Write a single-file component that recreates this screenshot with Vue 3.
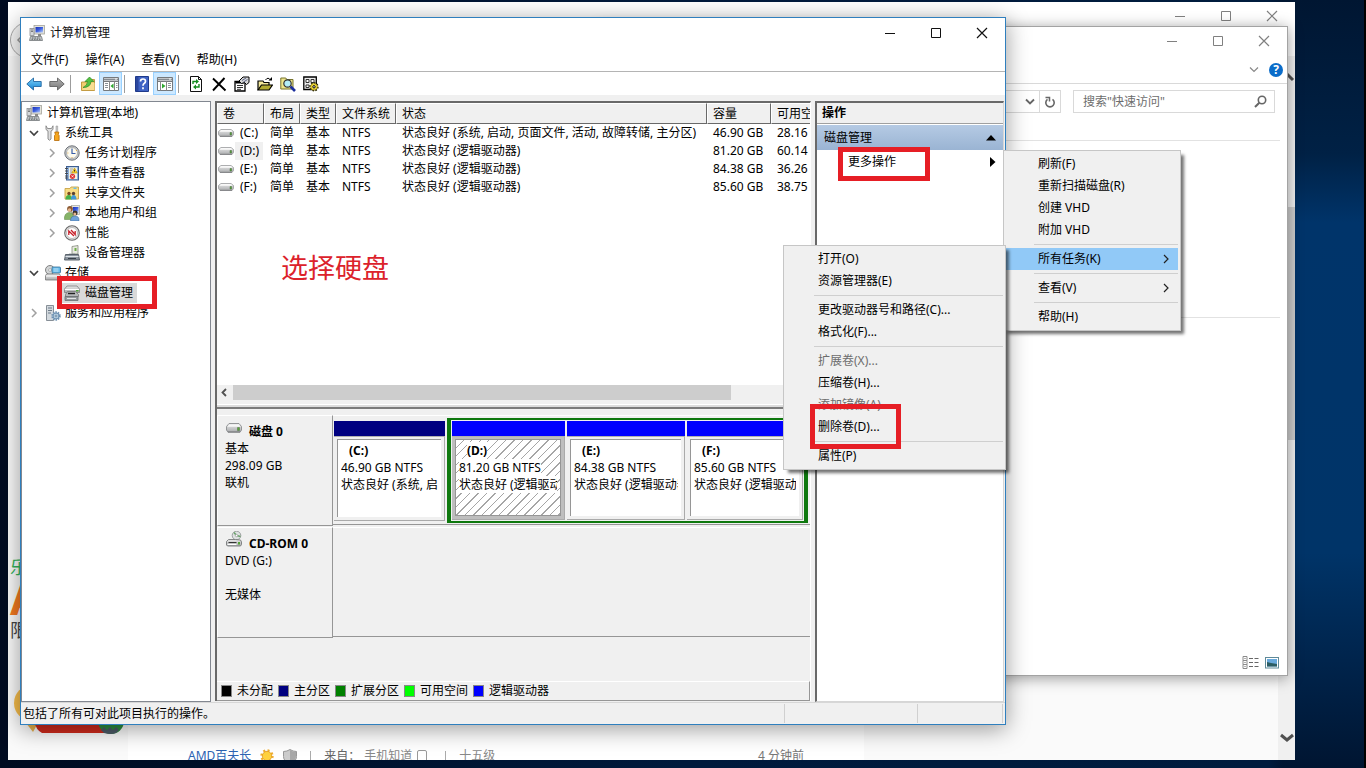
<script setup>
const menus = ['文件(F)', '操作(A)', '查看(V)', '帮助(H)']

const tools = [
  { icon: 'back', label: '后退' },
  { icon: 'forward', label: '前进' },
  { sep: true },
  { icon: 'up', label: '向上' },
  { icon: 'paneleft', label: '显示/隐藏控制台树', on: true },
  { sep: true },
  { icon: 'help', label: '帮助' },
  { icon: 'paneright', label: '显示/隐藏操作窗格', on: true },
  { sep: true },
  { icon: 'refresh', label: '刷新' },
  { icon: 'delete', label: '删除' },
  { icon: 'props', label: '属性' },
  { icon: 'open', label: '打开' },
  { icon: 'find', label: '查找' },
  { icon: 'settings', label: '设置' },
]

const tree = [
  { text: '计算机管理(本地)', icon: 'computer', level: 0 },
  { text: '系统工具', icon: 'tools', level: 1, state: 'open' },
  { text: '任务计划程序', icon: 'clock', level: 2, state: 'closed' },
  { text: '事件查看器', icon: 'events', level: 2, state: 'closed' },
  { text: '共享文件夹', icon: 'shared', level: 2, state: 'closed' },
  { text: '本地用户和组', icon: 'users', level: 2, state: 'closed' },
  { text: '性能', icon: 'perf', level: 2, state: 'closed' },
  { text: '设备管理器', icon: 'device', level: 2 },
  { text: '存储', icon: 'storage', level: 1, state: 'open' },
  { text: '磁盘管理', icon: 'diskmgmt', level: 2, selected: true },
  { text: '服务和应用程序', icon: 'services', level: 1, state: 'closed' },
]

const columns = ['卷', '布局', '类型', '文件系统', '状态', '容量', '可用空间']
const volumes = [
  { name: '(C:)', status: '状态良好 (系统, 启动, 页面文件, 活动, 故障转储, 主分区)', size: '46.90 GB', free: '28.16 GB' },
  { name: '(D:)', status: '状态良好 (逻辑驱动器)', size: '81.20 GB', free: '60.14 GB', picked: true },
  { name: '(E:)', status: '状态良好 (逻辑驱动器)', size: '84.38 GB', free: '36.26 GB' },
  { name: '(F:)', status: '状态良好 (逻辑驱动器)', size: '85.60 GB', free: '38.75 GB' },
]

const logical = [
  { name: '(D:)', size: '81.20 GB NTFS', cls: 'part-d', picked: true },
  { name: '(E:)', size: '84.38 GB NTFS', cls: 'part-e' },
  { name: '(F:)', size: '85.60 GB NTFS', cls: 'part-f' },
]

const legend = [
  { text: '未分配', cls: 'black' },
  { text: '主分区', cls: 'navy' },
  { text: '扩展分区', cls: 'green' },
  { text: '可用空间', cls: 'lime' },
  { text: '逻辑驱动器', cls: 'blue' },
]

const actionMenu = [
  { text: '刷新(F)' },
  { text: '重新扫描磁盘(R)' },
  { text: '创建 VHD' },
  { text: '附加 VHD' },
  { sep: true },
  { text: '所有任务(K)', sub: true, hot: true },
  { sep: true },
  { text: '查看(V)', sub: true },
  { sep: true },
  { text: '帮助(H)' },
]

const taskMenu = [
  { text: '打开(O)' },
  { text: '资源管理器(E)' },
  { sep: true },
  { text: '更改驱动器号和路径(C)...' },
  { text: '格式化(F)...' },
  { sep: true },
  { text: '扩展卷(X)...', off: true },
  { text: '压缩卷(H)...' },
  { text: '添加镜像(A)...', off: true },
  { text: '删除卷(D)...', marked: true },
  { sep: true },
  { text: '属性(P)' },
]
</script>

<template>
  <div class="desktop">
    <svg class="defs" width="0" height="0" aria-hidden="true">
      <defs>
        <linearGradient id="gBlue" x1="0" y1="0" x2="0" y2="1"><stop offset="0" stop-color="#7fd3fa" /><stop offset="1" stop-color="#1382d2" /></linearGradient>
        <linearGradient id="gGrey" x1="0" y1="0" x2="0" y2="1"><stop offset="0" stop-color="#b5b5b5" /><stop offset="1" stop-color="#777" /></linearGradient>
        <linearGradient id="gScreen" x1="0" y1="0" x2="1" y2="1"><stop offset="0" stop-color="#1a2fb4" /><stop offset=".5" stop-color="#3c60e0" /><stop offset="1" stop-color="#b9d0fa" /></linearGradient>
        <linearGradient id="gDrive" x1="0" y1="0" x2="0" y2="1"><stop offset="0" stop-color="#e9e9e9" /><stop offset="1" stop-color="#a9abad" /></linearGradient>
        <symbol id="i-computer" viewBox="0 0 16 16">
          <rect x="5" y="0.5" width="10.5" height="8.5" fill="#e4e4dc" stroke="#a3a39c" stroke-width=".8" />
          <rect x="6.5" y="2" width="7.5" height="5.5" fill="url(#gScreen)" />
          <path d="M9 9h3v2H9z" fill="#888" />
          <rect x="1" y="3.5" width="4" height="7" fill="#d5d8da" stroke="#8b8d8f" stroke-width=".8" />
          <path d="M2 5h2M2 6.500h2" stroke="#555" stroke-width=".7" />
          <path d="M1.500 11.500h11l1 4H.5z" fill="#bfc3c5" stroke="#74787b" stroke-width=".8" />
          <path d="M3 13h8M2.500 14.300h9" stroke="#53585b" stroke-width=".8" stroke-dasharray="1.500 1" />
        </symbol>
        <symbol id="i-tools" viewBox="0 0 16 16">
          <path d="M1 .8v3.700l2 1.500v8q1.200 2.500 3 0V6l2-1.500V.8L6.500 3.500h-4z" fill="#dedede" stroke="#848484" stroke-width=".9" />
          <path d="M11 1h1.700v5.500H11z" fill="#ccc" stroke="#888" stroke-width=".5" />
          <path d="M9.800 7h4l-.5 2.500.8 1V15.500H9.500v-5l.8-1z" fill="#f7a61c" stroke="#b56a06" stroke-width=".8" />
        </symbol>
        <symbol id="i-clock" viewBox="0 0 16 16">
          <circle cx="8" cy="8" r="7.200" fill="#c9cdd1" stroke="#6d7175" />
          <circle cx="8" cy="8" r="5.500" fill="#fdfbef" stroke="#9b9c9e" stroke-width=".7" />
          <path d="M8 3.500v5h3.500" fill="none" stroke="#3a5ea8" stroke-width="1.200" />
          <path d="M12 5.500h.8M3.500 8h.8M8 12v.8" stroke="#db9a2b" />
        </symbol>
        <symbol id="i-events" viewBox="0 0 16 16">
          <rect x="2.500" y="1.500" width="12" height="13.500" fill="#8fb0da" stroke="#3e5f92" />
          <rect x="5" y="2.500" width="8" height="11.500" fill="#f4f4e4" />
          <path d="M1 3.500h3M1 6h3M1 8.500h3M1 11h3M1 13h3" stroke="#444" stroke-width=".9" />
          <path d="M6 4h3M6 6h2M6 8h2" stroke="#888" stroke-width=".8" />
          <path d="M10.500 3l2.800 5H7.800z" fill="#ffd42e" stroke="#b38a00" stroke-width=".6" />
          <path d="M10.500 4.800v1.800" stroke="#333" />
          <circle cx="8.500" cy="11.300" r="2.600" fill="#e03434" /><path d="M7.500 10.300l2 2M9.500 10.300l-2 2" stroke="#fff" stroke-width=".8" />
        </symbol>
        <symbol id="i-shared" viewBox="0 0 16 16">
          <path d="M1 3.500h5l1-1.500h7.500v12H1z" fill="#f7dc84" stroke="#c9a548" stroke-width=".9" />
          <path d="M9.500 2.500h3v1.500h-3z" fill="#6bbce8" />
          <circle cx="5" cy="8.500" r="1.700" fill="#7c4b22" /><circle cx="9.500" cy="8.500" r="1.700" fill="#5a4130" />
          <path d="M1.500 14.500q0-4.500 3.300-4.500t3.200 4.500z" fill="#46b04a" /><path d="M7 14.500q0-4.500 2.700-4.500t2.800 4.500z" fill="#3f97d6" />
        </symbol>
        <symbol id="i-users" viewBox="0 0 16 16">
          <rect x="7.500" y=".5" width="8" height="9" fill="#e8e8e0" stroke="#b0b0aa" stroke-width=".8" /><rect x="9" y="2" width="5.500" height="6" fill="url(#gScreen)" />
          <circle cx="6" cy="3.800" r="2.900" fill="#8b5a33" /><circle cx="5.500" cy="5" r="1.700" fill="#e7b58d" />
          <path d="M.5 14.500q-.5-6.500 4.500-7t5 7z" fill="#86b368" stroke="#5c8341" stroke-width=".5" />
          <circle cx="11" cy="8" r="2.500" fill="#3b332c" /><circle cx="10.800" cy="9" r="1.500" fill="#e7b58d" />
          <path d="M6.500 16q0-5 4.500-5t4 5z" fill="#6fa3da" stroke="#386595" stroke-width=".5" />
        </symbol>
        <symbol id="i-perf" viewBox="0 0 16 16">
          <circle cx="8" cy="8" r="7.300" fill="#e4e4e4" stroke="#686868" stroke-width="1.100" />
          <circle cx="8" cy="8" r="5.500" fill="#fff" stroke="#999" stroke-width=".6" />
          <path d="M4.800 10V6l5.200 5M7 5l4.200 4.500V6" fill="none" stroke="#c8202a" stroke-width="1.300" />
        </symbol>
        <symbol id="i-device" viewBox="0 0 16 16">
          <path d="M8 1.500l6-1V9H8z" fill="#e7e9df" stroke="#84887c" stroke-width=".8" /><path d="M10.500 3h2v3h-2z" fill="#6fae48" />
          <path d="M5 8.500h6l1 2.500H4z" fill="#9ea3a8" />
          <path d="M1.500 9.500h13l1 5.500H.5z" fill="#8b949e" stroke="#4f5861" stroke-width=".9" />
          <path d="M1.500 11.500h13" stroke="#dfe4e8" /><path d="M4 13.500h8" stroke="#394149" />
        </symbol>
        <symbol id="i-storage" viewBox="0 0 16 16">
          <circle cx="5" cy="5" r="4.500" fill="#d2d5d6" stroke="#777" stroke-width=".9" /><circle cx="5" cy="5" r="1.400" fill="#fff" stroke="#888" stroke-width=".6" />
          <rect x="7" y="2" width="8.500" height="6" rx="1" fill="#64b9e9" stroke="#356f98" stroke-width=".8" /><path d="M8.500 4h5M8.500 6h5" stroke="#d9f1ff" stroke-width=".8" />
          <path d="M1.500 9h13l1 2v4H.5v-4z" fill="url(#gDrive)" stroke="#777" stroke-width=".8" />
          <path d="M1 11h14" stroke="#fafafa" /><path d="M12.500 12.500h2v1.500h-2z" fill="#4da635" />
        </symbol>
        <symbol id="i-diskmgmt" viewBox="0 0 16 16">
          <path d="M3 1h10l2.500 3v3.500H.5V4z" fill="url(#gDrive)" stroke="#7d7f81" stroke-width=".8" />
          <path d="M.8 4.500h14.400" stroke="#fff" /><path d="M12 5h2.500v1.500H12z" fill="#4da635" />
          <path d="M3.500 6.500h8l3 3v2H1.500v-2z" fill="#b4b7b9" stroke="#777" stroke-width=".8" /><path d="M4 8.500h7" stroke="#222" stroke-width="1.400" />
          <path d="M1 11.500h13v4H1z" fill="#959a9d" stroke="#6a6e71" stroke-width=".8" /><path d="M3 13.500h9" stroke="#e3e6e8" />
        </symbol>
        <symbol id="i-services" viewBox="0 0 16 16">
          <path d="M1.500.5h7v15h-7z" fill="#d3d9de" stroke="#7c858c" stroke-width=".9" /><path d="M3 3h4M3 5.500h4M3 8h3" stroke="#6d7b87" stroke-width="1.200" />
          <circle cx="11" cy="11" r="3.800" fill="#dbe8f3" stroke="#6a8fb0" stroke-width="1.800" stroke-dasharray="1.500 .9" /><circle cx="11" cy="11" r="2.900" fill="#c4d9ea" stroke="#6a8fb0" /><circle cx="11" cy="11" r="1" fill="#fff" stroke="#4c718f" stroke-width=".8" />
        </symbol>
        <symbol id="i-drive" viewBox="0 0 16 10">
          <path d="M3 .5h10l2.500 3v3.500l-1.500 2.300H2L.5 7V3.500z" fill="url(#gDrive)" stroke="#8a8c8e" stroke-width=".9" />
          <path d="M3 1.500h10l1.500 2.300h-13z" fill="#f6f6f6" /><path d="M2 8.800h12" stroke="#77797b" stroke-width=".8" />
          <path d="M11.500 4.500h2v3h-2z" fill="#54a436" stroke="#4f6d44" stroke-width=".5" />
        </symbol>
        <symbol id="i-drive-small" viewBox="0 0 16 8">
          <path d="M3 .5h10l2.500 2v3l-1.500 2H2l-1.500-2v-3z" fill="url(#gDrive)" stroke="#9a9c9e" stroke-width=".8" />
          <path d="M3 1h10l1.500 1.700h-13z" fill="#f8f8f8" /><path d="M2 7.300h12" stroke="#77797b" stroke-width=".8" />
          <path d="M12 3.500h1.600v2.500H12z" fill="#54a436" stroke="#4f6d44" stroke-width=".5" />
        </symbol>
        <symbol id="i-cdrom" viewBox="0 0 16 16">
          <circle cx="10.500" cy="4.500" r="4.300" fill="#dfe2e2" stroke="#898d8e" stroke-width=".8" /><path d="M10.500 4.500L8 1.500M10.500 4.500l4 1" stroke="#68a36a" stroke-width="1.500" /><circle cx="10.500" cy="4.500" r="1.200" fill="#fff" stroke="#888" stroke-width=".6" />
          <path d="M2.500 8.500h7l5 .5 1 2v2.500l-1 1.500h-13L.5 14v-3.500z" fill="url(#gDrive)" stroke="#77797b" stroke-width=".9" /><path d="M2.500 11.500h8" stroke="#333" /><path d="M12 11h2v2.500h-2z" fill="#54a436" /><path d="M1.500 13.500h9" stroke="#fff" />
        </symbol>
        <symbol id="i-back" viewBox="0 0 16 16"><path d="M.8 8L7.500 2v3.500h7.700v5H7.500V14z" fill="url(#gBlue)" stroke="#2166a2" stroke-width=".9" /></symbol>
        <symbol id="i-forward" viewBox="0 0 16 16"><path d="M15.200 8L8.500 2v3.500H.8v5h7.700V14z" fill="url(#gGrey)" stroke="#626262" stroke-width=".9" /></symbol>
        <symbol id="i-up" viewBox="0 0 16 16">
          <path d="M1.500 6h5l1.500-2.500h6.500v11h-13z" fill="#f3ce72" stroke="#bd9336" stroke-width=".9" /><path d="M2 14h12.500V7H7z" fill="#f9dd92" />
          <path d="M3 11.500q4.500-2 4.500-6H5L9.500 1 14 5.500h-3q-.5 6-8 6z" fill="#54c143" stroke="#2d8a22" stroke-width=".7" />
        </symbol>
        <symbol id="i-paneleft" viewBox="0 0 16 16">
          <path d="M.5 1.500h15v13H.5z" fill="#fff" stroke="#75797d" /><path d="M1 3.500h14" stroke="#858b91" stroke-width="2" /><path d="M.5 5.500h15" stroke="#75797d" /><path d="M12 3h2" stroke="#fff" />
          <path d="M6.500 5.500v9M11.500 5.500v9" stroke="#888" /><path d="M2 7.500h3M2 9.500h3M2 11.500h3M13 7.500h1.500M13 9.500h1.500M13 11.500h1.500" stroke="#8b9298" /><path d="M10.500 7.500v5l-3-2.500z" fill="#2fa82f" />
        </symbol>
        <symbol id="i-paneright" viewBox="0 0 16 16">
          <path d="M.5 1.500h15v13H.5z" fill="#fff" stroke="#75797d" /><path d="M1 3.500h14" stroke="#858b91" stroke-width="2" /><path d="M.5 5.500h15" stroke="#75797d" /><path d="M12 3h2" stroke="#fff" />
          <path d="M3.500 5.500v9M9.500 5.500v9" stroke="#888" /><path d="M11 7.500h3M11 9.500h3M11 11.500h3" stroke="#8b9298" /><path d="M5 7.500v5L8.500 10z" fill="#2fa82f" />
        </symbol>
        <symbol id="i-help" viewBox="0 0 16 16">
          <path d="M1.500.5h13v15h-13z" fill="#3f63c4" stroke="#1f3a8b" /><path d="M2 1h2.500v14H2z" fill="#2b479e" />
          <path d="M6.500 5.500q0-2.500 2.500-2.500t2.500 2.300q0 1.400-1.400 2.200Q9 8.200 9 9.800M9 11.300v1.900" fill="none" stroke="#fff" stroke-width="1.700" />
        </symbol>
        <symbol id="i-refresh" viewBox="0 0 16 16">
          <path d="M2.500.5h8l3 3v12h-11z" fill="#fff" stroke="#111" /><path d="M10.500.5v3h3" fill="none" stroke="#111" />
          <path d="M5 8V5.500h3.500M11 8v3H7.500" fill="none" stroke="#168c20" stroke-width="1.400" /><path d="M8 3l3 2.500L8 8zM8 8.500v5L5 11z" fill="#168c20" />
        </symbol>
        <symbol id="i-delete" viewBox="0 0 16 16"><path d="M2 2.500l12.500 12M13.500 2L2 14.500" stroke="#000" stroke-width="1.900" /></symbol>
        <symbol id="i-props" viewBox="0 0 16 16">
          <path d="M1 5.500h10v9.500H1z" fill="#fff" stroke="#000" stroke-width="1.300" /><path d="M1.500 6.500h9" stroke="#000" stroke-width="2" /><path d="M3 9.500h6M3 11.500h6M3 13.300h4" stroke="#333" />
          <path d="M5 5l4-4h6v5.500l-2.500 2-2-2-3 1z" fill="#d6d6d6" stroke="#000" /><path d="M8 4.500l4-2.500M9.500 6l4-2.500" stroke="#5a6488" />
        </symbol>
        <symbol id="i-open" viewBox="0 0 16 16">
          <path d="M1 14V5h5l1 1.500h5V9" fill="#f3e89b" stroke="#000" stroke-width="1.200" /><path d="M1 14l3.500-5h11L12 14z" fill="#b0a932" stroke="#000" stroke-width="1.200" />
          <path d="M8.500 4q2.500-3.500 5 0" fill="none" stroke="#000" /><path d="M11.500 4.500h3.500V1z" fill="#000" />
        </symbol>
        <symbol id="i-find" viewBox="0 0 16 16">
          <path d="M.8 2h5l1 1.500H13v9.500H.8z" fill="#eee58c" stroke="#77732b" /><circle cx="7.500" cy="7.500" r="3.700" fill="#b3edf8" stroke="#333" stroke-width="1.200" /><path d="M10.500 10.500l4.500 4.500" stroke="#1b2e9d" stroke-width="2.600" />
        </symbol>
        <symbol id="i-settings" viewBox="0 0 16 16">
          <path d="M.8 1h12.500v12.500H.8z" fill="#eee" stroke="#000" stroke-width="1.300" /><path d="M3 3.500h3v3H3zM8 3.500h3v3H8zM3 9h3v2.500H3z" fill="#fff" stroke="#333" />
          <circle cx="11" cy="10.800" r="3.400" fill="#f5df3d" stroke="#302b00" stroke-width="2.600" stroke-dasharray="1.400 1.200" /><circle cx="11" cy="10.800" r="3.300" fill="#f5df3d" stroke="#7a6a00" stroke-width=".5" /><circle cx="11" cy="10.800" r="1.200" fill="#fff" stroke="#000" />
        </symbol>
        <symbol id="i-min" viewBox="0 0 12 12"><path d="M1 6.500h10" stroke="currentColor" /></symbol>
        <symbol id="i-max" viewBox="0 0 12 12"><path d="M1.500 1.500h9v9h-9z" fill="none" stroke="currentColor" /></symbol>
        <symbol id="i-close" viewBox="0 0 12 12"><path d="M1 1l10 10M11 1L1 11" stroke="currentColor" stroke-width="1.200" /></symbol>
      </defs>
    </svg>

    <section class="browser" aria-label="浏览器">
      <div class="controls top-controls">
        <button aria-label="最小化"><svg width="12" height="12"><use href="#i-min" /></svg></button>
        <button aria-label="最大化"><svg width="12" height="12"><use href="#i-max" /></svg></button>
        <button aria-label="关闭"><svg width="12" height="12"><use href="#i-close" /></svg></button>
      </div>
      <svg class="nav-back" width="38" height="38" viewBox="0 0 38 38"><circle cx="19" cy="19" r="17.500" fill="#f8f8f8" stroke="#a9a9a9" /><path d="M13 15l-4 4 4 4" fill="none" stroke="#999" stroke-width="1.500" /></svg>
      <div class="page">
        <div class="ad">
          <span class="ad-green">乐</span>
          <span class="ad-orange">A</span>
          <span class="ad-dark">限</span>
          <svg class="ad-art" width="116" height="56" viewBox="0 0 116 56">
            <circle cx="22" cy="22" r="18" fill="#f7bd4b" />
            <path d="M16 42h12l-5 9z" fill="#e7b04b" /><path d="M24 40h72l-2 12H32q-6-3-8-12z" fill="#cf2a1c" />
            <circle cx="101" cy="40" r="13" fill="#2c8f3e" /><path d="M91 49l3-3 3 3 3-3 3 3 3-3 3 3-3 3q-5 2-12 0z" fill="#4c5a66" />
          </svg>
        </div>
        <div class="post">
          <a href="#">AMD百夫长</a>
          <svg width="16" height="16" viewBox="0 0 16 16"><circle cx="8" cy="8" r="5.500" fill="none" stroke="#eeaf35" stroke-width="2.400" stroke-dasharray="2 2.300" /><circle cx="8" cy="8" r="4.700" fill="#ffd13d" stroke="#e29820" stroke-width=".8" /></svg>
          <svg class="shield" width="14" height="15" viewBox="0 0 14 15"><path d="M.5 2.500Q4 2.500 7 .5q3 2 6.500 2v5q0 5-6.500 7-6.500-2-6.500-7z" fill="#ccc" stroke="#999" /><path d="M7 1v13q6-2 6-7V3Q9.500 3 7 1z" fill="#a8a8a8" /></svg>
          <i></i><span class="from">来自：</span><span class="phone-name">手机知道</span>
          <svg class="phone" width="12" height="16" viewBox="0 0 12 16"><rect x="1.500" y="2.500" width="9" height="13" rx="1.500" fill="none" stroke="#999" /></svg>
          <i></i><span>十五级</span><span class="ago">4 分钟前</span>
        </div>
        <div class="side-page"></div>
        <div class="page-scroll">
          <svg width="18" height="24" viewBox="0 0 18 24"><path d="M3 14l6-6 6 6" fill="none" stroke="#505050" stroke-width="3" /></svg>
          <div class="page-thumb"></div>
          <svg class="down" width="18" height="24" viewBox="0 0 18 24"><path d="M3 9l6 5 6-5" fill="none" stroke="#505050" stroke-width="3" /></svg>
        </div>
      </div>
    </section>

    <section class="explorer" aria-label="资源管理器">
      <div class="controls">
        <button aria-label="最小化"><svg width="12" height="12"><use href="#i-min" /></svg></button>
        <button aria-label="最大化"><svg width="12" height="12"><use href="#i-max" /></svg></button>
        <button aria-label="关闭"><svg width="12" height="12"><use href="#i-close" /></svg></button>
      </div>
      <div class="ribbon">
        <svg width="10" height="8" viewBox="0 0 10 8"><path d="M1 1.500l4 4 4-4" fill="none" stroke="#888" stroke-width="1.200" /></svg>
        <button class="help" aria-label="帮助">?</button>
      </div>
      <div class="address">
        <div class="path"><svg width="10" height="8" viewBox="0 0 10 8"><path d="M1 1.500l4 4 4-4" fill="none" stroke="#666" stroke-width="1.800" /></svg></div>
        <button class="reload" aria-label="刷新"><svg width="12" height="14" viewBox="0 0 12 14"><path d="M3.500 4.300A4.200 4.200 0 1 0 8.500 4.300" fill="none" stroke="#666" stroke-width="1.600" /><path d="M1.500 2.500h4v4" fill="none" stroke="#666" stroke-width="1.500" /></svg></button>
        <label class="search"><input type="text" aria-label="搜索" placeholder="搜索&quot;快速访问&quot;" />
          <svg width="13" height="13" viewBox="0 0 13 13"><circle cx="8" cy="5" r="3.700" fill="none" stroke="#666" stroke-width="1.600" /><path d="M5.300 7.700L1 12" stroke="#666" stroke-width="2" /></svg></label>
      </div>
      <div class="files"><hr /><hr /></div>
      <div class="views">
        <svg width="17" height="14" viewBox="0 0 17 14"><path d="M1 .5h4v4H1zM1 4.500h4v4H1zM1 8.500h4v4H1z" fill="#fff" stroke="#8a8a8a" /><path d="M2.500 2.500h1M2.500 6.500h1M2.500 10.500h1M7 2.500h4M12.500 2.500h4M7 6.500h4M12.500 6.500h4M7 10.500h4M12.500 10.500h4" stroke="#666" /></svg>
        <svg width="14" height="12" viewBox="0 0 14 12"><rect x=".5" y=".5" width="13" height="10.500" fill="#fff" stroke="#5f8a99" /><path d="M2 2h10v7.500H2z" fill="#68a9dc" /><path d="M2 5l4 1 6 1v2.500H2z" fill="#2c5d63" /></svg>
      </div>
    </section>

    <main class="window">
      <header class="title">
        <svg width="16" height="16"><use href="#i-computer" /></svg>
        <span>计算机管理</span>
        <div class="controls">
          <button aria-label="最小化"><svg width="12" height="12"><use href="#i-min" /></svg></button>
          <button aria-label="最大化"><svg width="12" height="12"><use href="#i-max" /></svg></button>
          <button aria-label="关闭"><svg width="12" height="12"><use href="#i-close" /></svg></button>
        </div>
      </header>
      <nav class="menubar"><button v-for="m in menus" :key="m">{{ m }}</button></nav>
      <div class="toolbar">
        <template v-for="(t, n) in tools" :key="n">
          <i v-if="t.sep"></i>
          <button v-else :class="{ on: t.on }" :aria-label="t.label"><svg width="16" height="16"><use :href="'#i-' + t.icon" /></svg></button>
        </template>
      </div>

      <div class="body">
        <ul class="tree">
          <li v-for="n in tree" :key="n.text" :class="'level' + n.level">
            <svg v-if="n.level" class="twist" width="16" height="16" viewBox="0 0 16 16">
              <path v-if="n.state === 'open'" d="M4 6l4 4 4-4" fill="none" stroke="#404040" stroke-width="1.700" />
              <path v-if="n.state === 'closed'" d="M6 4l4 4-4 4" fill="none" stroke="#a0a0a0" stroke-width="1.500" />
            </svg>
            <button :class="{ selected: n.selected }"><svg width="16" height="16"><use :href="'#i-' + n.icon" /></svg><span>{{ n.text }}</span></button>
            <div v-if="n.selected" class="mark mark-tree"></div>
          </li>
        </ul>

        <div class="center">
          <div class="list">
            <table>
              <colgroup><col class="c1" /><col class="c2" /><col class="c2" /><col class="c4" /><col class="c5" /><col class="c6" /><col class="c7" /></colgroup>
              <thead><tr><th v-for="c in columns" :key="c">{{ c }}</th></tr></thead>
              <tbody>
                <tr v-for="v in volumes" :key="v.name">
                  <td class="vol" :class="{ picked: v.picked }"><svg width="16" height="8"><use href="#i-drive-small" /></svg><span>{{ v.name }}</span></td>
                  <td>简单</td><td>基本</td><td>NTFS</td><td>{{ v.status }}</td><td>{{ v.size }}</td><td>{{ v.free }}</td>
                </tr>
              </tbody>
            </table>
            <p class="note">选择硬盘</p>
            <div class="hscroll"><svg width="16" height="15" viewBox="0 0 16 15"><path d="M9 4L5.500 7.500 9 11" fill="none" stroke="#505050" stroke-width="1.800" /></svg><div class="thumb"></div></div>
          </div>
          <div class="splitter"></div>
          <div class="disks">
            <div class="disk">
              <div class="label">
                <b><svg width="16" height="10"><use href="#i-drive" /></svg>磁盘 0</b>
                <span>基本</span><span>298.09 GB</span><span>联机</span>
              </div>
              <div class="parts">
                <div class="part primary">
                  <div class="bar"></div>
                  <div class="cell"><div class="box"><b>(C:)</b><span>46.90 GB NTFS</span><span>状态良好 (系统, 启动</span></div></div>
                </div>
                <div class="extended">
                  <div v-for="p in logical" :key="p.name" class="part" :class="[p.cls, { hatched: p.picked }]">
                    <div class="bar"></div>
                    <div class="cell"><div class="box"><b>{{ p.name }}</b><span>{{ p.size }}</span><span>状态良好 (逻辑驱动器)</span></div></div>
                  </div>
                </div>
              </div>
            </div>
            <div class="disk">
              <div class="label">
                <b><svg class="cd" width="16" height="16"><use href="#i-cdrom" /></svg>CD-ROM 0</b>
                <span>DVD (G:)</span><span>&nbsp;</span><span>无媒体</span>
              </div>
              <div class="parts"></div>
            </div>
            <div class="legend"><span v-for="l in legend" :key="l.text"><i :class="l.cls"></i>{{ l.text }}</span></div>
          </div>
        </div>

        <aside class="actions">
          <h2>操作</h2>
          <button class="group">磁盘管理<svg width="10" height="6" viewBox="0 0 10 6"><path d="M5 0l5 5.500H0z" fill="#000" /></svg></button>
          <div class="more"><button>更多操作<svg width="6" height="10" viewBox="0 0 6 10"><path d="M0 0l5.500 5L0 10z" fill="#000" /></svg></button>
            <div class="mark mark-more"></div></div>
        </aside>
      </div>
      <footer class="status"><span>包括了所有可对此项目执行的操作。</span><i></i><i class="last"></i></footer>
    </main>

    <div class="popup action-popup" role="menu">
      <template v-for="(m, n) in actionMenu" :key="n">
        <hr v-if="m.sep" />
        <button v-else role="menuitem" :class="{ hot: m.hot }">{{ m.text }}<svg v-if="m.sub" width="6" height="10" viewBox="0 0 6 10"><path d="M1 1l4 4-4 4" fill="none" stroke="#222" stroke-width="1.200" /></svg></button>
      </template>
    </div>
    <div class="popup task-popup" role="menu">
      <template v-for="(m, n) in taskMenu" :key="n">
        <hr v-if="m.sep" />
        <button v-else role="menuitem" :disabled="m.off">{{ m.text }}<span v-if="m.marked" class="mark mark-delete"></span></button>
      </template>
    </div>
  </div>
</template>

<style>
body { margin: 0; overflow: hidden; }
</style>

<style scoped>
* { box-sizing: border-box; }
.desktop {
  position: relative; width: 100%; height: 100vh; overflow: hidden;
  font: 12px/18px "Noto Sans", "Noto Sans CJK SC", sans-serif; color: #000;
  background: linear-gradient(90deg, #000b20 0%, #001a3c 50%, #001c3e 93%, transparent 94%), linear-gradient(180deg, #001632 0%, #002145 20%, #00346a 29%, #003468 72%, #00244c 86%, #001531 100%);
  border-right: 2px solid #000;
}
.defs { position: absolute; }
button { font: inherit; color: inherit; background: none; border: 0; padding: 0; margin: 0; text-align: left; white-space: nowrap; }
svg { flex: none; display: block; }
.controls { display: flex; margin-left: auto; }
.controls button { width: 46px; height: 28px; display: flex; align-items: center; justify-content: center; }

.browser { position: absolute; left: 8px; top: 2px; right: 69px; bottom: 8px; background: #fff; overflow: hidden; display: flex; flex-direction: column; }
.top-controls { color: #808080; height: 54px; flex: none; }
.nav-back { position: absolute; left: 1px; top: 19px; }
.page { flex: 1; position: relative; display: flex; min-height: 0; }
.ad { width: 120px; background: #fafafa; padding: 499px 0 0 2px; flex: none; display: flex; flex-direction: column; }
.ad-green { color: #35b45a; font-size: 18px; line-height: 24px; }
.ad-orange { color: #f37920; font-size: 44px; line-height: 38px; font-weight: 700; }
.ad-dark { color: #444; font-size: 18px; line-height: 26px; }
.ad-art { margin-top: 38px; }
.post { flex: 1; align-self: flex-end; display: flex; align-items: center; height: 8px; margin: 0 60px; color: #888; }
.post a { color: #2d64b3; text-decoration: none; margin-right: 8px; }
.post i { width: 1px; height: 10px; background: #aaa; margin: 0 13px; }
.shield { margin-left: 8px; }
.from { color: #666; }
.phone-name { margin-left: 4px; }
.phone { margin: 0 4px; }
.ago { margin-left: auto; color: #777; }
.side-page { width: 414px; background: #fafafa; flex: none; }
.page-scroll { width: 17px; background: #f0f0f0; flex: none; display: flex; flex-direction: column; padding-top: 10px; }
.page-thumb { background: #cdcdcd; margin-top: 117px; height: 233px; }
.down { margin-top: auto; margin-bottom: 10px; }

.explorer {
  position: absolute; left: 600px; top: 26px; right: 76px; bottom: 92px; background: #fff; border: 1px solid #a3a3a3;
  box-shadow: 0 2px 14px rgba(0, 0, 0, .4); display: flex; flex-direction: column; color: #808080;
}
.ribbon { height: 29px; display: flex; align-items: center; justify-content: flex-end; gap: 10px; padding: 2px 4px 0 0; border-bottom: 1px solid #d9d9d9; }
.help { width: 14px; height: 14px; border-radius: 7px; background: #0a6cc9; color: #fff; font-weight: 700; line-height: 14px; text-align: center; }
.address { display: flex; margin: 6px 12px 0; height: 23px; }
.path { flex: 1; border: 1px solid #d9d9d9; display: flex; align-items: center; justify-content: flex-end; padding-right: 4px; }
.reload { width: 21px; border: 1px solid #d9d9d9; border-left: 0; display: flex; align-items: center; justify-content: center; }
.search { width: 202px; margin-left: 12px; border: 1px solid #d9d9d9; display: flex; align-items: center; padding: 0 7px 0 9px; }
.search input { flex: 1; min-width: 0; border: 0; padding: 0; font: inherit; outline: 0; background: none; }
.search input::placeholder { color: #6d6d6d; opacity: 1; }
.files { flex: 1; padding: 27px 7px 0; }
.files hr { border: 0; height: 1px; background: #e2e2e2; margin: 0 0 176px; }
.views { display: flex; gap: 6px; justify-content: flex-end; align-items: center; padding: 0 8px 5px; }

.window {
  position: absolute; left: 20px; top: 17px; right: 358px; bottom: 43px; border: 1px solid #2f7fbe; background: #f0f0f0;
  box-shadow: 0 4px 22px rgba(0, 0, 0, .4); display: flex; flex-direction: column;
}
.title { display: flex; align-items: center; height: 29px; background: #fff; padding-left: 8px; gap: 5px; color: #111; }
.menubar { display: flex; gap: 17px; height: 25px; padding: 4px 10px 2px; background: #fff; border-bottom: 1px solid #b4b4b4; }
.toolbar { display: flex; height: 23px; padding-left: 1px; background: #fff; }
.toolbar button { width: 23px; height: 23px; display: flex; align-items: center; justify-content: center; }
.toolbar .on { background: #cce8ff; border: 1px solid #99d1ff; }
.toolbar i { width: 1px; height: 18px; background: #9c9c9c; margin: 3px 5px 0 2px; }
.body { flex: 1; min-height: 0; display: flex; padding: 6px 1px 0 0; }

.tree { width: 190px; flex: none; margin: 0; padding: 1px 0 0; list-style: none; background: #fff; border: 1px solid #828790; }
.tree li { position: relative; display: flex; align-items: center; height: 20px; padding-left: 4px; }
.tree .level2 { padding-left: 22px; }
.twist { margin-right: 2px; }
.tree button { display: flex; align-items: center; gap: 4px; height: 20px; padding: 0 4px 0 1px; }
.tree .level0 button { padding-left: 0; gap: 5px; }
.tree .level2 button { gap: 5px; padding-left: 2px; }
.tree .selected { background: #d9d9d9; }
.mark { position: absolute; border: 5px solid #e61e25; pointer-events: none; }
.mark-tree { left: 35px; top: -7px; width: 100px; height: 33px; z-index: 2; }

.center { flex: 1; min-width: 0; margin: 0 4px 1px; border-left: 2px solid #696969; border-top: 2px solid #696969; border-right: 1px solid #fff; display: flex; flex-direction: column; }
.list { flex: 300 1 0; min-height: 0; background: #fff; overflow: hidden; display: flex; flex-direction: column; }
table { table-layout: fixed; border-collapse: separate; border-spacing: 0; width: 660px; flex: none; }
.c1 { width: 47px; } .c2 { width: 36px; } .c4 { width: 60px; } .c5 { width: 311px; } .c6 { width: 64px; } .c7 { width: 106px; }
th { height: 21px; padding: 0 0 0 5px; text-align: left; font-weight: 400; background: #f0f0f0; border-right: 1px solid #696969; border-bottom: 1px solid #696969; border-top: 1px solid #fff; border-left: 1px solid #fff; }
td { height: 18px; padding: 0 0 0 6px; line-height: 18px; white-space: nowrap; }
.vol { display: flex; align-items: center; padding-left: 1px; gap: 1px; }
.vol span { padding: 0 4px 0 5px; }
.picked span { background: #f0f0f0; }
.note { margin: 54px 0 0 64px; font-size: 27px; line-height: 36px; color: #dc222b; }
.hscroll { margin-top: auto; height: 15px; background: #f0f0f0; display: flex; }
.thumb { width: 84%; background: #cdcdcd; }
.splitter { height: 9px; border-bottom: 2px solid #7a7a7a; flex: none; background: linear-gradient(#f0f0f0 4px, #fff 4px, #fff 5px, #dcdcdc 5px); }
.disks { flex: 288 1 0; display: flex; flex-direction: column; padding-top: 6px; }
.disk { display: flex; height: 111px; margin-bottom: 1px; }
.label { width: 116px; flex: none; display: flex; flex-direction: column; padding: 7px 0 0 7px; border: 1px solid #fff; border-right: 1px solid #969696; border-bottom: 1px solid #969696; line-height: 17px; }
.label b { display: flex; gap: 7px; height: 17px; padding-left: 1px; }
.label b .cd { margin-top: -4px; }
.parts { flex: 1; min-width: 0; display: flex; padding: 2px 2px 1px 0; border-top: 1px solid #fff; border-bottom: 1px solid #969696; margin-bottom: 1px; }
.part { display: flex; flex-direction: column; min-width: 0; }
.primary { flex: 114 1 0; padding: 3px 2px 2px 1px; }
.primary .bar { background: #000080; }
.extended { flex: 361 1 0; min-width: 0; display: flex; gap: 2px; border: solid #0e780e; border-width: 2px 4px; padding: 1px; }
.part-d { flex: 113 1 0; } .part-e { flex: 118 1 0; } .part-f { flex: 116 1 0; }
.bar { height: 15px; background: #0000ff; flex: none; }
.cell { flex: 1; min-height: 0; display: flex; padding: 2px 3px 3px; border-top: 1px solid #b0b0b0; border-right: 1px solid #aaa; border-bottom: 1px solid #aaa; background: #f0f0f0; }
.box { flex: 1; min-width: 0; overflow: clip; overflow-clip-margin: content-box; padding: 2px 3px; background: #fff; border-top: 1px solid #969696; border-left: 1px solid #969696; display: flex; flex-direction: column; align-items: flex-start; line-height: 17px; white-space: nowrap; }
.box b { margin-left: 8px; background: #fff; }
.hatched .cell { background: #bebebe; }
.hatched .box { border: 1px solid #969696; background: repeating-linear-gradient(135deg, #fff 0, #fff 5px, #a6a6a6 5px, #a6a6a6 6px); }
.hatched span { background: #fff; }
.legend { margin-top: auto; height: 20px; display: flex; gap: 5px; padding-left: 4px; border-top: 1px solid #fff; border-right: 1px solid #969696; border-bottom: 1px solid #969696; }
.legend span { display: flex; align-items: center; gap: 5px; }
.legend i { width: 11px; height: 12px; border: 1px solid #888; }
.black { background: #000; } .navy { background: #000080; } .green { background: #008000; } .lime { background: #0f0; } .blue { background: #00f; }

.actions { width: 189px; flex: none; background: #fff; border: 1px solid #d6d6d6; border-left: 2px solid #696969; border-top: 2px solid #696969; display: flex; flex-direction: column; }
.actions h2 { margin: 0 0 1px; font-size: 12px; height: 21px; line-height: 20px; padding-left: 5px; background: #f0f0f0; border-bottom: 1px solid #a0a0a0; }
.group { height: 25px; display: flex; align-items: center; justify-content: space-between; padding: 0 7px; background: linear-gradient(#b5cae4, #9ab4d3); }
.more { position: relative; }
.more button { width: 100%; height: 24px; display: flex; align-items: center; justify-content: space-between; padding: 0 7px 0 31px; }
.mark-more { left: 21px; top: -3px; width: 92px; height: 34px; }

.status { height: 22px; display: flex; align-items: center; padding-left: 2px; border-top: 1px solid #d7d7d7; flex: none; }
.status span { flex: 1; }
.status i { width: 133px; height: 19px; border-left: 1px solid #d0d0d0; }
.status .last { width: 86px; border-right: 1px solid #d0d0d0; margin-right: 2px; }

.popup { position: absolute; background: #f0f0f0; border: 1px solid #c6c6c6; padding: 2px; box-shadow: 4px 4px 3px -1px rgba(0, 0, 0, .55); display: flex; flex-direction: column; }
.popup button { position: relative; display: flex; align-items: center; justify-content: space-between; height: 22px; padding: 0 9px 0 32px; }
.popup button:disabled { color: #6d6d6d; }
.popup hr { border: 0; height: 1px; background: #cfcfcf; margin: 3px 0 3px 28px; }
.popup .hot { background: #91c9f7; }
.action-popup { top: 150px; right: 183px; width: 178px; }
.task-popup { top: 245px; right: 358px; width: 223px; }
.mark-delete { left: 24px; top: -12px; width: 91px; height: 45px; }
</style>
